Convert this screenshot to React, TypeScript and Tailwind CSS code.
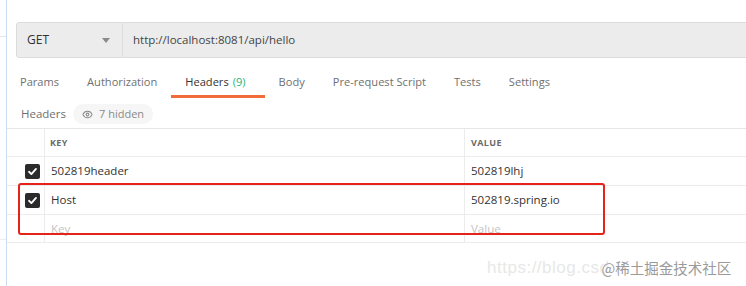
import { Eye } from "lucide-react";

const tabs = [
  { label: "Params" },
  { label: "Authorization" },
  { label: "Headers", count: "(9)", active: true },
  { label: "Body" },
  { label: "Pre-request Script" },
  { label: "Tests" },
  { label: "Settings" },
];

const rows = [
  { key: "502819header", value: "502819lhj", checked: true },
  { key: "Host", value: "502819.spring.io", checked: true },
];

function Checkbox() {
  return (
    <div className="w-[15px] h-[15px] rounded-[2px] bg-[#2b2b2b] flex items-center justify-center">
      <svg width="11" height="11" viewBox="0 0 12 12" fill="none">
        <path d="M2.2 6.3 L4.8 8.8 L9.8 3.2" stroke="#fff" strokeWidth="2" strokeLinecap="round" strokeLinejoin="round" />
      </svg>
    </div>
  );
}

export default function App() {
  return (
    <div className="w-[746px] h-[286px] bg-white flex overflow-hidden font-['Open_Sans',sans-serif] text-[11.5px] text-[#505050]">
      {/* left pane edge */}
      <div className="w-[7px] shrink-0 border-r border-[#c9ddf2] flex flex-col">
        <div className="h-[37px] border-b border-[#e4e4e4]" />
        <div className="h-[203px] border-b border-[#ececec]" />
      </div>

      <div className="flex-1 flex flex-col min-w-0 relative">
        {/* url bar */}
        <div className="mt-[22px] ml-[9px] h-[36px] flex">
          <div className="w-[107px] shrink-0 bg-[#ececec] border border-[#dcdcdc] rounded-l-[3px] flex items-center justify-between pl-[10px] pr-[12px]">
            <span className="text-[12px] text-[#333]">GET</span>
            <svg width="8" height="5" viewBox="0 0 8 5">
              <path d="M0 0 L8 0 L4 5 Z" fill="#8a8a8a" />
            </svg>
          </div>
          <div className="flex-1 bg-[#ececec] border-y border-[#dcdcdc] flex items-center pl-[10px]">
            <span className="text-[11.5px] text-[#444]">http://localhost:8081/api/hello</span>
          </div>
        </div>

        {/* tabs */}
        <div className="mt-[12px] h-[28px] flex -ml-[1px] text-[11.1px]">
          {tabs.map((t) => (
            <div
              key={t.label}
              className={`pl-[14px] flex items-center border-b-[3px] ${
                t.active ? "pr-[19px] border-[#f26b3a] text-[#333]" : "pr-[14px] border-transparent text-[#707070]"
              }`}
            >
              <span>{t.label}</span>
              {t.count && <span className="ml-[4px] text-[#26b47f]">{t.count}</span>}
            </div>
          ))}
        </div>

        {/* headers label */}
        <div className="mt-[6px] h-[20px] flex items-center pl-[14px] gap-[7px]">
          <span className="text-[#707070]">Headers</span>
          <div className="h-[20px] px-[9px] rounded-full bg-[#f6f6f6] flex items-center gap-[6px] text-[#8a8a8a]">
            <Eye size={11} strokeWidth={2.2} />
            <span className="text-[11px]">7 hidden</span>
          </div>
        </div>

        {/* table */}
        <div className="mt-[4px] border-t border-[#e6e6e6] text-[#333]">
          <div className="h-[28px] flex border-b border-[#ececec]">
            <div className="w-[38px] shrink-0 border-r border-[#ececec]" />
            <div className="w-[420px] shrink-0 border-r border-[#ececec] flex items-center pl-[5px] text-[9px] font-bold tracking-[0.04em] text-[#6a6a6a]">
              KEY
            </div>
            <div className="flex-1 flex items-center pl-[6px] text-[9px] font-bold tracking-[0.04em] text-[#6a6a6a]">
              VALUE
            </div>
          </div>
          {rows.map((r) => (
            <div key={r.key} className="h-[29px] flex border-b border-[#ececec]">
              <div className="w-[38px] shrink-0 border-r border-[#ececec] flex items-center justify-end pr-[4px]">
                {r.checked && <Checkbox />}
              </div>
              <div className="w-[420px] shrink-0 border-r border-[#ececec] flex items-center pl-[6px]">{r.key}</div>
              <div className="flex-1 flex items-center pl-[6px]">{r.value}</div>
            </div>
          ))}
          <div className="h-[28px] flex border-b border-[#ececec] text-[#c4c4c4]">
            <div className="w-[38px] shrink-0 border-r border-[#ececec]" />
            <div className="w-[420px] shrink-0 border-r border-[#ececec] flex items-center pl-[6px]">Key</div>
            <div className="flex-1 flex items-center pl-[6px]">Value</div>
          </div>
        </div>

        {/* red highlight annotation */}
        <div className="absolute left-[11px] top-[183px] w-[587px] h-[52px] border-[2.5px] border-[#e5231b] rounded-[3px]" />

        {/* watermark */}
        <div className="absolute left-[480px] top-[255px] flex items-center whitespace-nowrap">
          <span className="text-[#e8e8e8] text-[17px] font-['Liberation_Sans',sans-serif] tracking-[0.03em]">https://blog.csd</span>
          <span className="-ml-[8px] text-[#9a9a9a] font-['Noto_Sans_CJK_SC',sans-serif] text-[14.5px] [text-shadow:0_0_2px_#fff]">
            @稀土掘金技术社区
          </span>
        </div>
      </div>
    </div>
  );
}
